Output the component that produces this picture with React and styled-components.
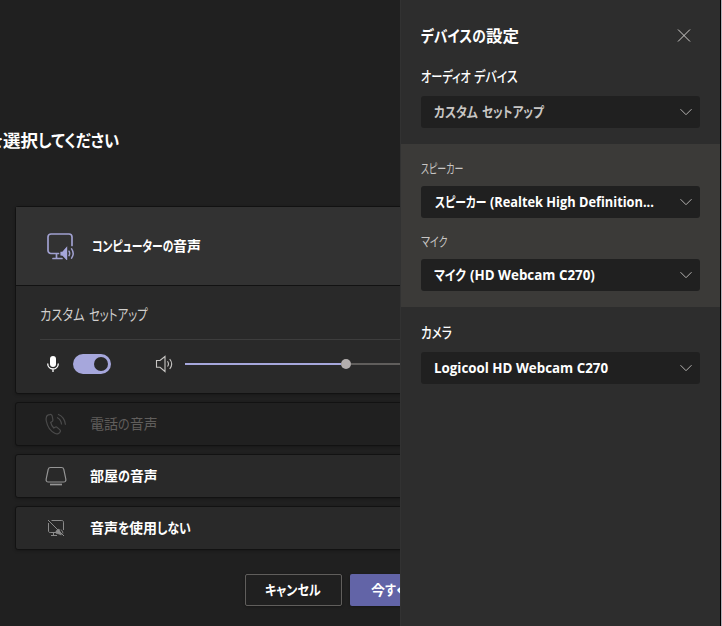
import React, { useLayoutEffect, useRef } from "react";
import styled, { createGlobalStyle, css } from "styled-components";

const GlobalStyle = createGlobalStyle`
  * { box-sizing: border-box; }
  html, body { margin: 0; height: 100%; overflow: hidden; background: #202020; }
  body { font-family: "Open Sans", "Noto Sans CJK JP", sans-serif; }
`;

const Screen = styled.div`
  display: grid;
  grid-template-columns: 400px 320px 2px;
  width: 722px;
  height: 626px;
  overflow: hidden;
  background: #202020;
`;

const Stage = styled.main`
  display: flex;
  flex-direction: column;
  min-width: 0;
  overflow: hidden;
`;

const WindowEdge = styled.div`
  background: #b4b4bc;
  border-left: 1px solid #000;
`;

const Line = styled.span`
  display: flex;
  align-items: center;
  height: 24px;
  white-space: pre;
  font-size: ${(p) => p.$size || 14}px;
  font-weight: ${(p) => p.$weight || 700};
  color: ${(p) => p.$color || "#fff"};
`;

const RunBox = styled.span`
  flex: none;
  width: ${(p) => p.$width}px;
  height: 24px;
  line-height: ${(p) => (p.$latin ? 24 : 22)}px;
`;

const RunInk = styled.span`
  display: inline-block;
  font-family: ${(p) => (p.$latin ? '"Open Sans"' : '"Noto Sans CJK JP"')}, sans-serif;
  font-feature-settings: "palt";
  transform-origin: 0 50%;
`;

/* A run of glyphs condensed to a set width, for the narrow kana of UI fonts. */
function Run({ width, latin, children }) {
  const ink = useRef(null);
  useLayoutEffect(() => {
    const fit = () => {
      const el = ink.current;
      if (el) el.style.transform = `scaleX(${width / el.offsetWidth})`;
    };
    fit();
    document.fonts?.ready.then(fit);
  }, [width]);
  return (
    <RunBox $width={width} $latin={latin}>
      <RunInk ref={ink} $latin={latin}>{children}</RunInk>
    </RunBox>
  );
}

const Heading = styled.h1`
  margin: 129px 0 0 -14px;
  height: 24px;
  font-size: inherit;
`;

const AudioOptions = styled.section`
  display: flex;
  flex-direction: column;
  gap: 8px;
  margin: 53px 0 0 15px;
  width: 420px;
`;

const card = css`
  border: 1px solid #121212;
  border-radius: 3px;
  box-shadow: 0 1px 3px rgba(0, 0, 0, 0.25);
`;

const ComputerCard = styled.div`
  ${card}
  height: 188px;
  background: #292929;
`;

const ComputerHeader = styled.div`
  display: flex;
  align-items: center;
  gap: 17px;
  height: 79px;
  padding-left: 31px;
  background: #323232;
  border-bottom: 1px solid #121212;
`;

const CustomSetup = styled.div`
  padding: 17px 0 0 24px;
`;

const Controls = styled.div`
  display: flex;
  align-items: center;
  height: 49px;
  margin-top: 12px;
  padding-left: 6px;
  border-top: 1px solid #3d3d3d;
`;

const Toggle = styled.div`
  display: flex;
  justify-content: flex-end;
  align-items: center;
  width: 38px;
  height: 20px;
  margin: 0 44px 0 13px;
  padding-right: 3px;
  border-radius: 10px;
  background: #a6a7dc;
`;

const ToggleKnob = styled.span`
  width: 14px;
  height: 14px;
  border-radius: 50%;
  background: #292929;
`;

const Slider = styled.div`
  display: flex;
  align-items: center;
  width: 235px;
  margin-left: 12px;
`;

const Track = styled.span`
  width: ${(p) => p.$width}px;
  height: 2px;
  background: ${(p) => p.$color};
`;

const Thumb = styled.span`
  flex: none;
  width: 10px;
  height: 10px;
  border-radius: 50%;
  background: #b3aead;
`;

const OptionRow = styled.div`
  ${card}
  display: flex;
  align-items: center;
  height: 44px;
  padding-left: 28px;
  background: ${(p) => (p.$disabled ? "#202020" : "#292929")};
`;

const OptionIcon = styled.span`
  display: flex;
  justify-content: center;
  width: 24px;
  margin-right: 22px;
`;

const Actions = styled.div`
  display: flex;
  gap: 8px;
  margin: 24px 0 0 245px;
  width: 220px;
`;

const Button = styled.button`
  display: flex;
  align-items: center;
  flex: none;
  width: ${(p) => p.$width}px;
  height: 32px;
  padding: 0 0 0 ${(p) => (p.$primary ? 21 : 19)}px;
  border: ${(p) => (p.$primary ? "0" : "1px solid #605e5c")};
  border-radius: 2px;
  background: ${(p) => (p.$primary ? "#6264a7" : "#202020")};
  box-shadow: 0 1px 3px rgba(0, 0, 0, 0.3);
`;

const Panel = styled.aside`
  display: flex;
  flex-direction: column;
  background: #2d2d2d;
  border-left: 1px solid #323232;
`;

const PanelHeader = styled.header`
  display: flex;
  justify-content: space-between;
  align-items: center;
  height: 24px;
  margin: 24px 28px 0 20px;
`;

const Field = styled.div`
  display: flex;
  flex-direction: column;
  gap: ${(p) => p.$gap || 6}px;
  padding: ${(p) => p.$top || 0}px 20px 0 20px;
`;

const Select = styled.div`
  display: flex;
  align-items: center;
  justify-content: space-between;
  width: 279px;
  height: 32px;
  padding: 0 7px 0 ${(p) => p.$inset || 12.5}px;
  border-radius: 3px;
  background: #202020;
`;

const DeviceGroup = styled.div`
  height: 163px;
  margin-top: 16px;
  background: #3b3a38;
`;

const Chevron = () => (
  <svg width="14" height="8" viewBox="0 0 14 8" fill="none" stroke="#b4b2b0">
    <path d="M1.500 1.200 7 6.700l5.500-5.500" />
  </svg>
);

const CloseIcon = () => (
  <svg width="16" height="16" viewBox="0 0 16 16" fill="none" stroke="#d0cecc">
    <path d="m2 1.500 12 12m0-12-12 12" />
  </svg>
);

const ComputerIcon = () => (
  <svg width="28" height="28" viewBox="0 0 28 28" fill="none" stroke="#a0a0cf" strokeWidth="1.700" strokeLinecap="round">
    <path d="M11.500 21.500H4a3 3 0 0 1-3-3V5a3 3 0 0 1 3-3h18a3 3 0 0 1 3 3v8.500M9.500 22v4M6 26.500h9" />
    <path d="m14 20.300 1.800-.2 3.800-4.300v11.400l-3.800-4-1.800-.3z" fill="#a6a7dc" stroke="#a6a7dc" strokeWidth="1.200" />
    <path d="M22 19.200q1.300 2.200 0 4.500M24.600 16.800q3.200 4.700 0 9.300" strokeWidth="1.500" />
  </svg>
);

const MicIcon = () => (
  <svg width="14" height="18" viewBox="0 0 14 18" fill="none" stroke="#fff" strokeWidth="1.300">
    <rect x="4" y="1" width="6" height="11" rx="3" fill="#fff" stroke="none" />
    <path d="M1.700 8.500c0 7.300 10.600 7.300 10.600 0M7 14v3" />
  </svg>
);

const SpeakerIcon = () => (
  <svg width="18" height="18" viewBox="0 0 18 18" fill="none" stroke="#c8c6c4" strokeWidth="1.100">
    <path d="M1.500 5.500h3.500L10 1.500v15l-5-4.200H1.500z" />
    <path d="M12.500 6.300q1.900 2.600 0 5.200M14.700 4q4 5 0 10" />
  </svg>
);

const PhoneIcon = () => (
  <svg width="22" height="22" viewBox="0 0 22 22" fill="none" stroke="#4b4b4b" strokeWidth="1.200">
    <path d="M3.200 1.900C1.200 2.700.8 5.200 1.300 8c1 5.200 4.400 10.200 8.500 12.300 2.600 1.400 4.700.2 5.500-1.800.3-.8 0-1.400-.6-1.900l-2.600-2.200c-.7-.6-1.400-.5-2.100-.1l-1.200.7c-1.700-1.700-2.600-3.400-3.100-5.700l1.200-.6c.8-.4 1.100-1 1-1.900l-.6-3.300c-.3-1.700-1.400-2.300-2.600-1.900zM12 4.500q4 1.700 4.600 7M13 1.200q6.600 2.500 7.500 10.500" />
  </svg>
);

const RoomIcon = () => (
  <svg width="22" height="20" viewBox="0 0 22 20" fill="none" stroke="#969696" strokeWidth="1.200">
    <path d="M5.500 1.500h11c1.300 0 2 .6 2.300 1.800l2 9.700c.4 2-.5 3-2.300 3h-15c-1.800 0-2.700-1-2.300-3l2-9.700c.3-1.200 1-1.800 2.300-1.800z" />
    <path d="M5 18.500h12" strokeWidth="1.700" />
  </svg>
);

const NoAudioIcon = () => (
  <svg width="18" height="18" viewBox="0 0 18 18" fill="none" stroke="#8b8b8b">
    <path d="M4.500 1.500h10.300c1 0 1.700.7 1.700 1.700V11M1.500 4v8c0 1 .7 1.500 1.700 1.500H9M6.500 13.500v3M4 16.500h6M1 1l16 16" />
    <path d="m9 12 3-2 2.300 6-2.300-1-3-.8zM14 10.500q2 1.700 2 4" fill="#8b8b8b" strokeWidth=".7" />
  </svg>
);

export default function App() {
  return (
    <>
      <GlobalStyle />
      <Screen>
        <Stage>
          <Heading>
            <Line $size={17}>
              <Run width={17}>を</Run>
              <Run width={35}>選択</Run>
              <Run width={81}>してください</Run>
            </Line>
          </Heading>
          <AudioOptions>
            <ComputerCard>
              <ComputerHeader>
                <ComputerIcon />
                <Line><Run width={81}>コンピューターの</Run><Run width={28}>音声</Run></Line>
              </ComputerHeader>
              <CustomSetup>
                <Line $size={15} $weight={400} $color="#d0cecc">
                  <Run width={45}>カスタム</Run><Run width={4}> </Run><Run width={58.5}>セットアップ</Run>
                </Line>
                <Controls>
                  <MicIcon />
                  <Toggle role="switch" aria-checked="true"><ToggleKnob /></Toggle>
                  <SpeakerIcon />
                  <Slider>
                    <Track $width={156} $color="#a6a7dc" />
                    <Thumb />
                    <Track $width={69} $color="#605e5c" />
                  </Slider>
                </Controls>
              </CustomSetup>
            </ComputerCard>
            <OptionRow $disabled>
              <OptionIcon><PhoneIcon /></OptionIcon>
              <Line $weight={400} $color="#605e5c">
                <Run width={28}>電話</Run><Run width={12}>の</Run><Run width={27.5}>音声</Run>
              </Line>
            </OptionRow>
            <OptionRow>
              <OptionIcon><RoomIcon /></OptionIcon>
              <Line><Run width={28}>部屋</Run><Run width={12}>の</Run><Run width={27.5}>音声</Run></Line>
            </OptionRow>
            <OptionRow>
              <OptionIcon><NoAudioIcon /></OptionIcon>
              <Line>
                <Run width={28}>音声</Run><Run width={11}>を</Run><Run width={28}>使用</Run><Run width={34}>しない</Run>
              </Line>
            </OptionRow>
          </AudioOptions>
          <Actions>
            <Button $width={97}><Line><Run width={56}>キャンセル</Run></Line></Button>
            <Button $width={120} $primary>
              <Line><Run width={14}>今</Run><Run width={11}>す</Run><Run width={11}>ぐ</Run><Run width={28}>参加</Run></Line>
            </Button>
          </Actions>
        </Stage>
        <Panel>
          <PanelHeader>
            <Line $size={16}><Run width={65}>デバイスの</Run><Run width={33}>設定</Run></Line>
            <CloseIcon />
          </PanelHeader>
          <Field $top={17} $gap={7}>
            <Line $size={14.5} $weight={500}>
              <Run width={50}>オーディオ</Run><Run width={3}> </Run><Run width={44}>デバイス</Run>
            </Line>
            <Select>
              <Line $color="#c8c6c4">
                <Run width={44}>カスタム</Run><Run width={4}> </Run><Run width={62}>セットアップ</Run>
              </Line>
              <Chevron />
            </Select>
          </Field>
          <DeviceGroup>
            <Field $top={13} $gap={5}>
              <Line $size={13} $weight={400} $color="#c8c6c4"><Run width={42}>スピーカー</Run></Line>
              <Select $inset={14}>
                <Line>
                  <Run width={51}>スピーカー</Run><Run width={4}> </Run>
                  <Run width={163.5} latin>(Realtek High Definition...</Run>
                </Line>
                <Chevron />
              </Select>
            </Field>
            <Field $top={12} $gap={5}>
              <Line $size={13} $weight={400} $color="#c8c6c4"><Run width={27}>マイク</Run></Line>
              <Select>
                <Line>
                  <Run width={32}>マイク</Run><Run width={4}> </Run>
                  <Run width={125} latin>(HD Webcam C270)</Run>
                </Line>
                <Chevron />
              </Select>
            </Field>
          </DeviceGroup>
          <Field $top={14} $gap={7}>
            <Line $size={14.5} $weight={500}><Run width={31}>カメラ</Run></Line>
            <Select>
              <Line><Run width={174.5} latin>Logicool HD Webcam C270</Run></Line>
              <Chevron />
            </Select>
          </Field>
        </Panel>
        <WindowEdge />
      </Screen>
    </>
  );
}
